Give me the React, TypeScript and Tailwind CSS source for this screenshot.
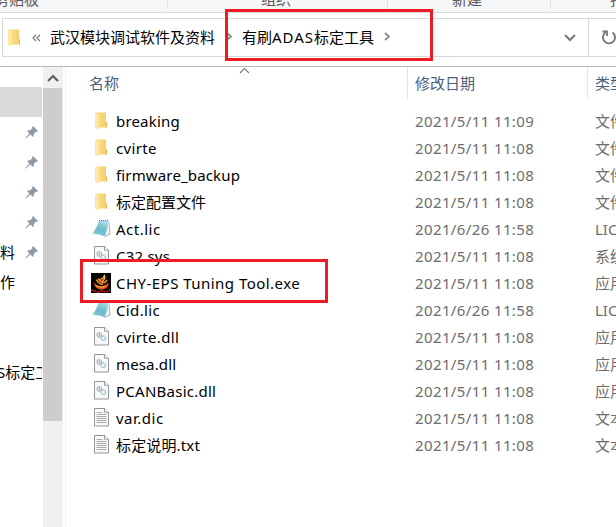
import React from "react";

type Kind = "folder" | "notepad" | "gear" | "flame" | "text";

type Entry = { kind: Kind; name: string; date: string; type: string; track: string };

const entries: Entry[] = [
  { kind: "folder", name: "breaking", date: "2021/5/11 11:09", type: "文件夹", track: "tracking-[0.18px]" },
  { kind: "folder", name: "cvirte", date: "2021/5/11 11:08", type: "文件夹", track: "tracking-[0.35px]" },
  { kind: "folder", name: "firmware_backup", date: "2021/5/11 11:08", type: "文件夹", track: "tracking-[0.15px]" },
  { kind: "folder", name: "标定配置文件", date: "2021/5/11 11:08", type: "文件夹", track: "tracking-[0px]" },
  { kind: "notepad", name: "Act.lic", date: "2021/6/26 11:58", type: "LIC 文件", track: "tracking-[0.5px]" },
  { kind: "gear", name: "C32.sys", date: "2021/5/11 11:08", type: "系统文件", track: "tracking-[0.2px]" },
  { kind: "flame", name: "CHY-EPS Tuning Tool.exe", date: "2021/5/11 11:08", type: "应用程序", track: "tracking-[0.47px]" },
  { kind: "notepad", name: "Cid.lic", date: "2021/6/26 11:58", type: "LIC 文件", track: "tracking-[0.35px]" },
  { kind: "gear", name: "cvirte.dll", date: "2021/5/11 11:08", type: "应用程序扩展", track: "tracking-[0.35px]" },
  { kind: "gear", name: "mesa.dll", date: "2021/5/11 11:08", type: "应用程序扩展", track: "tracking-[0.15px]" },
  { kind: "gear", name: "PCANBasic.dll", date: "2021/5/11 11:08", type: "应用程序扩展", track: "tracking-[0.25px]" },
  { kind: "text", name: "var.dic", date: "2021/5/11 11:08", type: "文本文档", track: "tracking-[0.5px]" },
  { kind: "text", name: "标定说明.txt", date: "2021/5/11 11:08", type: "文本文档", track: "tracking-[0.15px]" },
];

const sidebar = [
  { text: "", pin: false, selected: true },
  { text: "", pin: true },
  { text: "", pin: true },
  { text: "", pin: true },
  { text: "", pin: true },
  { text: "料", pin: true },
  { text: "作", pin: false },
  { text: "", pin: false },
  { text: "", pin: false },
  { text: "S标定工", pin: false, wide: true },
];

function Folder() {
  return (
    <svg width="13" height="18" viewBox="0 0 13 18" className="shrink-0">
      <defs>
        <linearGradient id="folderBack" x1="0" x2="1">
          <stop offset="0" stopColor="#ffdf8b" />
          <stop offset="1" stopColor="#f3cd6c" />
        </linearGradient>
      </defs>
      <path d="M1 .5h10v10l1 .7V15.500H3z" fill="url(#folderBack)" />
      <path d="M11 10v5.500h1V10.500z" fill="#e3b64d" />
      <path d="M0 .7 3.500 2.500c.5.300.5.600.5 1V15.500c0 1-.4 1.500-1 2L0 15.500z" fill="#ffe7a3" />
    </svg>
  );
}

function Page({ children }: { children: React.ReactNode }) {
  return (
    <svg width="15" height="19" viewBox="0 0 15 19" className="shrink-0">
      <path d="M.5.5h10.300l3.700 3.700v13.800H.5z" fill="#f8f9f9" stroke="#959595" />
      <path d="M10.500.5v3.700h4" fill="#fff" stroke="#959595" />
      {children}
    </svg>
  );
}

function FileIcon({ kind }: { kind: Kind }) {
  if (kind === "folder") return <Folder />;
  if (kind === "gear")
    return (
      <Page>
        <circle cx="5.300" cy="8" r="2.300" fill="#edf0f2" stroke="#9aa1a7" strokeWidth="1.200" strokeDasharray="1.300 .6" />
        <circle cx="5.300" cy="8" r=".9" fill="#a5adb4" />
        <circle cx="9.300" cy="11.200" r="2.300" fill="#e4f1f8" stroke="#8fb3ca" strokeWidth="1.200" strokeDasharray="1.300 .6" />
        <circle cx="9.300" cy="11.200" r=".9" fill="#fff" />
      </Page>
    );
  if (kind === "text")
    return (
      <Page>
        <path d="M2.500 4.500h6M2.500 6.500h10M2.500 8.500h10M2.500 10.500h10M2.500 12.500h10M2.500 14.500h10" stroke="#aaa" />
      </Page>
    );
  if (kind === "notepad")
    return (
      <svg width="19" height="19" viewBox="0 0 19 19" className="shrink-0">
        <defs>
          <linearGradient id="noteCover" x1=".8" y1="0" x2=".3" y2="1">
            <stop offset="0" stopColor="#b5dfe9" />
            <stop offset=".55" stopColor="#6dbaca" />
            <stop offset=".85" stopColor="#7cc1cf" />
            <stop offset="1" stopColor="#d5edf1" />
          </linearGradient>
        </defs>
        <path d="m17 1.500 1.500 13.500-6 3z" fill="#8f979e" />
        <path d="m16.500 2 1.200 12.500-5.700 3L13.500 8z" fill="#f0f3f5" />
        <path d="M7 1.500 17 1.500Q15.500 10 12.700 17.300 6.500 14.500 0 15 5 9 7 1.500" fill="url(#noteCover)" />
        <path d="M7 1.500H17" stroke="#6b777d" strokeWidth="1.100" strokeDasharray="1 1" />
      </svg>
    );
  return (
    <svg width="20" height="20" viewBox="0 0 20 20" className="shrink-0">
      <path d="M0 0h20v20H0z" fill="#050303" />
      <path d="M3 9Q4.500 12.500 9 13.500 13 14 17.500 9.500 17.500 14.500 13.500 16 10 17.300 6.500 15.500 3 13.500 3 9" fill="#ee5215" />
      <path d="M5.500 6.500Q7 10.500 12 11.500M7.500 5.500Q9.500 9.500 14 9.500L16 7" fill="none" stroke="#f78a1e" strokeWidth="1.700" />
      <path d="M13.500 1.500Q13.500 4.500 9.500 6.500M13.700 3v2.500L11.500 8" fill="none" stroke="#ffbd32" strokeWidth="1.300" />
      <path d="M5 12.500Q9.500 15.500 14.500 13" fill="none" stroke="#fbad27" strokeWidth="1.100" />
      <path d="M0 17.500h3M3 18.500l2-1M5.500 19h3M9 18h3M12.500 19l2-1M15 18.500h2M17.500 17.500h2" stroke="#c71c20" strokeWidth="1.300" />
    </svg>
  );
}

function Pin() {
  return (
    <svg width="13" height="13" viewBox="0 0 13 13">
      <path d="M8 0 13 5 12 6 11 5.500 8.800 7.900Q9.200 9.600 8 11L5.500 8.500.7 12.500 0 12.300 4.500 7.500 2 5q1.500-1.200 3.100-.7L7.500 2 7 1z" fill="#8d99a5" />
    </svg>
  );
}

function Chevron({ className, d, w, h, color, stroke = 2 }: { className?: string; d: string; w: number; h: number; color: string; stroke?: number }) {
  return (
    <svg width={w} height={h} viewBox={`0 0 ${w} ${h}`} className={`shrink-0 ${className ?? ""}`}>
      <path d={d} fill="none" stroke={color} strokeWidth={stroke} />
    </svg>
  );
}

export default function App() {
  return (
    <div className="relative flex h-[527px] w-[616px] flex-col overflow-hidden bg-white font-['Noto_Sans','Noto_Sans_CJK_SC',sans-serif] text-[15px] leading-[20px] whitespace-nowrap text-black">
      <header className="flex h-[13px] shrink-0 items-start border-b border-[#dadbdc] bg-[#f5f6f7] text-[#5a5a5a]">
        <div className="flex h-[9px] w-[168px] shrink-0 border-r border-[#dfe0e1]"><span className="-mt-[11px] -ml-[6px]">剪贴板</span></div>
        <div className="flex h-[9px] w-[220px] shrink-0 border-r border-[#dfe0e1] pl-[93px]"><span className="-mt-[11px]">组织</span></div>
        <div className="flex h-[9px] w-[163px] shrink-0 border-r border-[#dfe0e1] pl-[64px]"><span className="-mt-[11px]">新建</span></div>
        <span className="-mt-[11px] ml-[59px]">打开</span>
      </header>

      <nav className="flex h-[53px] shrink-0 border-b border-white pt-[5px] pl-[2px]">
        <div className="flex h-[39px] w-[587px] shrink-0 items-center border border-[#d9d9d9] pl-[5px]">
          <Folder />
          <Chevron className="ml-[11px]" w={9} h={8} d="M4 1 1 4 4 7M8 1 5 4 8 7" color="#777" stroke={1.2} />
          <span className="-mt-[2px] ml-[9px] w-[165px]">武汉模块调试软件及资料</span>
          <Chevron className="-mt-[3px] ml-[11px]" w={7} h={9} d="M1 1 5 4.500 1 8" color="#888" stroke={1.700} />
          <span className="-mt-[2px] ml-[9px] w-[132px]">有刷<span className="tracking-[0.95px]">ADAS</span>标定工具</span>
          <Chevron className="-mt-[3px] ml-[10px]" w={7} h={9} d="M1 1 5 4.500 1 8" color="#888" stroke={1.700} />
          <Chevron className="mr-[12px] ml-auto" w={12} h={8} d="M1 1 6 6 11 1" color="#777" />
        </div>
        <div className="flex h-[39px] w-[40px] shrink-0 items-center border-y border-[#d9d9d9] pl-[12px]">
          <svg width="16" height="16" viewBox="0 0 16 16">
            <path d="M4.500 2.500A6 6 0 1 0 11.500 2.500" fill="none" stroke="#777" strokeWidth="1.900" />
            <path d="M1.500 1.500H6V6" fill="none" stroke="#777" strokeWidth="1.800" />
          </svg>
        </div>
      </nav>

      <main className="flex min-h-0 flex-1 border-t border-[#b9b9b9]">
        <aside className="w-[43px] shrink-0 overflow-hidden pt-[20px]">
          {sidebar.map((item, i) => (
            <div key={i} className={`flex h-[30px] w-[42px] items-center overflow-hidden ${item.selected ? "bg-[#d9d9d9]" : ""}`}>
              {item.text && <span className={item.wide ? "-ml-[3px]" : "w-[15px]"}>{item.text}</span>}
              {item.pin && <span className="ml-auto pr-[4px]"><Pin /></span>}
            </div>
          ))}
        </aside>
        <div className="flex w-[20px] shrink-0 flex-col bg-[#f0f0f0]">
          <div className="flex h-[21px] items-center justify-center"><Chevron w={12} h={8} d="M1 7 6 2 11 7" color="#606060" stroke={2.200} /></div>
          <div className="h-[333px] w-[19px] bg-[#cdcdcd]" />
        </div>
        <section className="ml-[2px] flex w-[551px] shrink-0 flex-col border-l border-[#f0f0f0]">
          <div className="flex h-[32px] shrink-0 text-[#4c607a]">
            <div className="relative flex w-[342px] shrink-0 items-center border-r border-[#e5e5e5] pl-[23px]">
              名称
              <Chevron className="absolute top-0 left-[173px]" w={11} h={7} d="M1 6 5.500 1.500 10 6" color="#777" stroke={1.100} />
            </div>
            <div className="flex w-[180px] shrink-0 items-center border-r border-[#e5e5e5] pl-[7px]">修改日期</div>
            <span className="pt-[6px] pl-[7px]">类型</span>
          </div>
          <div className="flex flex-col pt-[8px]">
            {entries.map((e) => (
              <div key={e.name} className="flex h-[27px] items-center">
                <div className="flex w-[50px] shrink-0 items-center pr-[5px] pl-[25px]">
                  <span className="flex w-[20px] justify-center"><FileIcon kind={e.kind} /></span>
                </div>
                <span className={`w-[299px] shrink-0 ${e.track}`}><span>{e.name}</span></span>
                <span className="w-[180px] shrink-0 tracking-[0.38px] text-[#6d6d6d]"><span>{e.date}</span></span>
                <span className="text-[#6d6d6d]">{e.type}</span>
              </div>
            ))}
          </div>
        </section>
      </main>

      <div className="absolute top-[9px] left-[225px] h-[52px] w-[208px] border-3 border-[#ed1c24]" />
      <div className="absolute top-[259px] left-[80px] h-[44px] w-[248px] border-3 border-[#ed1c24]" />
    </div>
  );
}
